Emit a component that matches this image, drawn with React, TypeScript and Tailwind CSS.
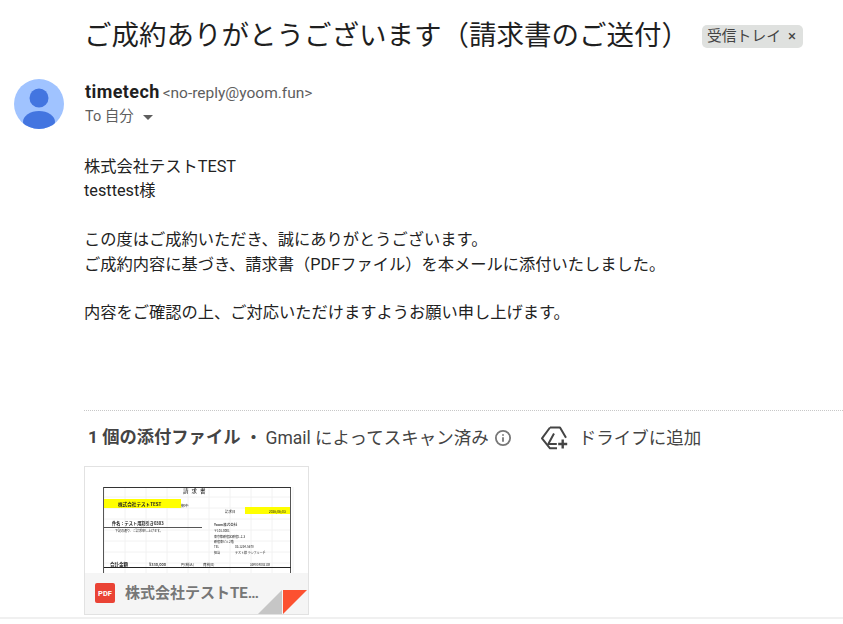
const jp = '"Noto Sans CJK JP"';

const lines = ['株式会社テストTEST', 'testtest様', '', 'この度はご成約いただき、誠にありがとうございます。', 'ご成約内容に基づき、請求書（PDFファイル）を本メールに添付いたしました。', '', '内容をご確認の上、ご対応いただけますようお願い申し上げます。'];

const Thumbnail = () => (
  <svg width="223" height="148" viewBox="0 0 223 148" className="absolute left-0 top-0 blur-[0.35px]">
    {[0, 1, 2, 3, 4, 5, 6, 7, 8, 9].map((i) => (
      <line key={i} x1={19 + i * 21} y1="20" x2={19 + i * 21} y2="107" stroke="#f2f2f2" strokeWidth="1" />
    ))}
    {[0, 1, 2, 3, 4, 5, 6, 7].map((i) => (
      <line key={i} x1="19" y1={30 + i * 11} x2="206" y2={30 + i * 11} stroke="#f2f2f2" strokeWidth="1" />
    ))}
    <rect x="19" y="32" width="77" height="9" fill="#ffff00" />
    <rect x="160" y="40" width="45" height="7" fill="#ffff00" />
    <line x1="18.5" y1="20" x2="18.5" y2="107" stroke="#555" />
    <line x1="205.5" y1="20" x2="205.5" y2="107" stroke="#555" />
    <line x1="19" y1="20.5" x2="206" y2="20.5" stroke="#333" />
    <line x1="19" y1="60.5" x2="117" y2="60.5" stroke="#555" />
    <line x1="19" y1="100.5" x2="206" y2="100.5" stroke="#222" />
    <g fontFamily={jp} fill="#222">
      <text x="98" y="25.5" fontSize="5.5" letterSpacing="3">請求書</text>
      <text x="33" y="39" fontSize="4.6" fontWeight="700">株式会社テストTEST</text>
      <text x="96" y="40" fontSize="3.8">御中</text>
      <text x="140" y="46" fontSize="3.5">請求日</text>
      <text x="184" y="46" fontSize="3.2">2026/06/03</text>
      <text x="27" y="58" fontSize="4.2" fontWeight="700">件名：テスト用割引き0303</text>
      <text x="30" y="65" fontSize="3">下記の通り、ご請求申し上げます。</text>
      <text x="129" y="59" fontSize="3.5" fontWeight="500">Yoom株式会社</text>
      <text x="129" y="65" fontSize="3">〒101-0001</text>
      <text x="129" y="70.5" fontSize="3">東京都新宿区新宿1-2-3</text>
      <text x="129" y="76" fontSize="3">新宿東ビル2階</text>
      <text x="129" y="81" fontSize="3">TEL</text>
      <text x="150" y="81" fontSize="3">03-1234-5678</text>
      <text x="129" y="87" fontSize="3">担当</text>
      <text x="150" y="87" fontSize="3">テスト様 ランプルーチ</text>
      <text x="25" y="99" fontSize="4.5" fontWeight="700">合計金額</text>
      <text x="64" y="98.5" fontSize="4" fontWeight="500">¥330,000</text>
      <text x="96" y="99" fontSize="3.5">円(税込)</text>
      <text x="118" y="99" fontSize="3.5">費税(0)</text>
      <text x="165" y="98.5" fontSize="3">3398C4082108</text>
    </g>
  </svg>
);

export default function App() {
  return (
    <div className="h-[624px] w-[843px] overflow-hidden bg-white text-[#222]" style={{ fontFamily: `Roboto, ${jp}, sans-serif` }}>
      <div className="flex h-[71px] items-center pl-[84px] pt-[1px]">
        <h1 className="whitespace-nowrap text-[27.5px] leading-none font-normal text-[#1f1f1f]">ご成約ありがとうございます（請求書のご送付）</h1>
        <span className="ml-[13px] flex h-[23px] w-[101px] items-center rounded-[5px] bg-[#dfe1df] pl-[5px] text-[14.8px] text-[#444]">
          受信トレイ
          <span className="ml-[7px] text-[15px] leading-none">×</span>
        </span>
      </div>

      <div className="flex h-[84px] pl-[14px] pt-[8px]">
        <svg width="50" height="50" viewBox="0 0 50 50" className="shrink-0">
          <defs>
            <clipPath id="avatar-clip"><circle cx="25" cy="25" r="25" /></clipPath>
          </defs>
          <circle cx="25" cy="25" r="25" fill="#a0c3ff" />
          <g clipPath="url(#avatar-clip)" fill="#4375e0">
            <circle cx="25" cy="19" r="9.5" />
            <ellipse cx="25" cy="43" rx="16" ry="11" />
          </g>
        </svg>
        <div className="ml-[21px] flex flex-col">
          <div className="-mt-[2px] flex h-[25px] items-baseline pt-[1px]">
            <span className="text-[18px] font-bold tracking-[0.4px] text-[#1f1f1f]">timetech</span>
            <span className="ml-[3px] text-[15.5px] text-[#5e5e5e]">&lt;no-reply@yoom.fun&gt;</span>
          </div>
          <div className="mt-[4px] flex items-center text-[14.5px] text-[#5e5e5e]">
            To 自分
            <span className="ml-[9px] mt-[2px] h-0 w-0 border-x-[5px] border-t-[5px] border-x-transparent border-t-[#5e5e5e]" />
          </div>
        </div>
      </div>

      <div className="pl-[84px] text-[16.25px] leading-[24.4px] text-[#222]">
        {lines.map((line, i) => (
          <div key={i} className="h-[24.4px] whitespace-nowrap">{line}</div>
        ))}
      </div>

      <div className="ml-[84px] mt-[84px] border-t border-dotted border-[#c8c8c8]" />

      <div className="flex h-[55px] items-center pl-[88px] text-[#444]">
        <span className="text-[17.3px] font-bold text-[#444]">1 個の添付ファイル</span>
        <span className="mx-[5px] text-[16px] font-bold">・</span>
        <span className="-ml-[1px] text-[17.5px] text-[#444]">Gmail によってスキャン済み</span>
        <svg width="18" height="18" viewBox="0 0 24 24" className="ml-[5px]" fill="none" stroke="#777" strokeWidth="2.4">
          <circle cx="12" cy="12" r="9.5" />
          <path d="M12 11v6M12 7v2" />
        </svg>
        <svg width="28" height="26" viewBox="0 0 28 26" className="ml-[29px] mt-[2px]" fill="none" stroke="#444" strokeWidth="2" strokeLinejoin="round">
          <path d="M9 1.5h10l6 10.2M9 1.5 1 12.3l8 10h7" />
          <path d="M13 7.5 7.3 18h8.5" />
          <path d="M21.7 13.5v9M17.2 18h9" strokeWidth="2.4" />
        </svg>
        <span className="ml-[10px] text-[17.5px] text-[#444]">ドライブに追加</span>
      </div>

      <div className="relative ml-[84px] h-[149px] w-[225px] overflow-hidden border border-[#e2e2e2] bg-white">
        <Thumbnail />
        <div className="absolute inset-x-0 bottom-0 flex h-[41px] items-center bg-[#f5f5f5] pl-[10px]">
          <span className="flex h-[20px] w-[20px] items-center justify-center rounded-[2px] bg-[#ea4335] text-[7.5px] font-bold text-white">PDF</span>
          <span className="ml-[10px] w-[136px] truncate text-[15px] font-bold text-[#777]">株式会社テストTEST</span>
        </div>
        <svg width="50" height="24" viewBox="0 0 50 24" className="absolute bottom-0 right-0">
          <path d="M0 24 24 0v24z" fill="#c6c6c6" />
          <path d="M25 0h24L25 24z" fill="#fc5130" />
        </svg>
      </div>
      <div className="mt-[2px] h-[2px] bg-[#f0f0f0]" />
    </div>
  );
}
